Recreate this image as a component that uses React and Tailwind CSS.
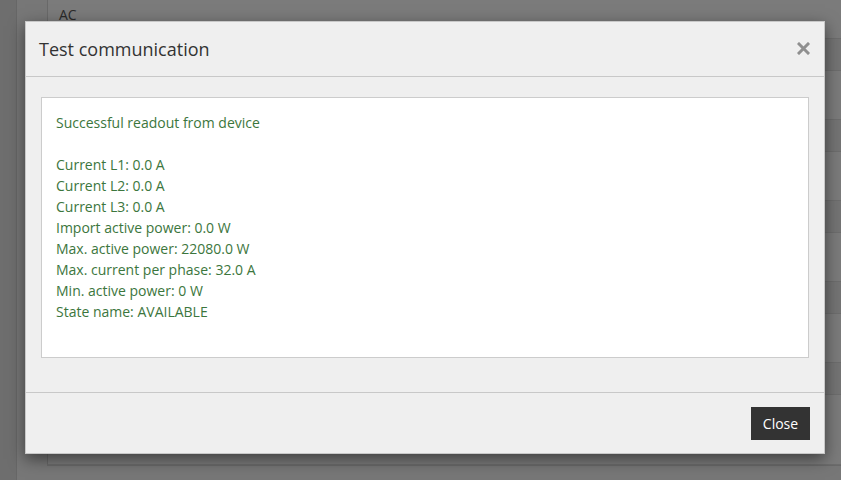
import React from 'react';

const rows = [
    { h: 'h-[39px]', shade: 'bg-[#f6f6f6]', label: 'AC' },
    { h: 'h-[32px]', shade: 'bg-[#e8e8e8]' },
    { h: 'h-[49px]', shade: 'bg-[#f6f6f6]' },
    { h: 'h-[32px]', shade: 'bg-[#e8e8e8]' },
    { h: 'h-[49px]', shade: 'bg-[#f6f6f6]' },
    { h: 'h-[32px]', shade: 'bg-[#e8e8e8]' },
    { h: 'h-[49px]', shade: 'bg-[#f6f6f6]' },
    { h: 'h-[32px]', shade: 'bg-[#e8e8e8]' },
    { h: 'h-[49px]', shade: 'bg-[#f6f6f6]' },
    { h: 'h-[32px]', shade: 'bg-[#e8e8e8]' },
    { h: 'h-[70px]', shade: 'bg-[#f6f6f6]' },
];

const readout = [
    'Current L1: 0.0 A',
    'Current L2: 0.0 A',
    'Current L3: 0.0 A',
    'Import active power: 0.0 W',
    'Max. active power: 22080.0 W',
    'Max. current per phase: 32.0 A',
    'Min. active power: 0 W',
    'State name: AVAILABLE',
];

const App = () => {
    return (
        <div className="relative w-[841px] h-[480px] overflow-hidden bg-[#efefef] font-['Open_Sans',sans-serif] text-[14px]">
            {/* Page behind the dialog */}
            <div className="flex h-full">
                <div className="w-[17px] shrink-0 bg-[#dcdcdc] border-r border-[#cfcfcf]"></div>
                <div className="w-[30px] shrink-0"></div>
                <div className="flex-1 self-start border-l border-b border-[#d2d2d2]">
                    {rows.map((r, i) => (
                        <div key={i} className={`${r.h} ${r.shade} border-b border-[#dadada] pl-[11px] pt-[4px] text-[#555]`}>
                            {r.label}
                        </div>
                    ))}
                </div>
            </div>

            {/* Backdrop */}
            <div className="absolute inset-0 bg-black/50"></div>

            {/* Dialog */}
            <div className="absolute top-[21px] left-[25px] w-[800px] bg-[#efefef] border border-[#c8c8c8] shadow-[0_5px_15px_rgba(0,0,0,0.5)]">
                <div className="h-[55px] flex items-center justify-between pl-[13px] pr-[14px] border-b border-[#c8c8c8]">
                    <h4 className="text-[18px] text-[#333] leading-[26px]">Test communication</h4>
                    <button className="text-[#8f8f8f] -mt-[1px]" aria-label="Close">
                        <svg width="13" height="13" viewBox="0 0 13 13">
                            <path d="M2 2 L11 11 M11 2 L2 11" stroke="currentColor" strokeWidth="3" strokeLinecap="square" />
                        </svg>
                    </button>
                </div>

                <div className="pt-[20px] pb-[34px] px-[15px] border-b border-[#c8c8c8]">
                    <div className="bg-white border border-[#cccccc] px-[14px] pt-[14px] pb-[35px] text-[#3c763d] leading-[21px]">
                        <div>Successful readout from device</div>
                        <div className="h-[21px]"></div>
                        {readout.map((line) => (
                            <div key={line}>{line}</div>
                        ))}
                    </div>
                </div>

                <div className="flex justify-end pt-[14px] pb-[13px] pr-[14px]">
                    <button className="h-[33px] w-[59px] bg-[#333333] text-white text-[14px]">Close</button>
                </div>
            </div>
        </div>
    );
};

export default App;
